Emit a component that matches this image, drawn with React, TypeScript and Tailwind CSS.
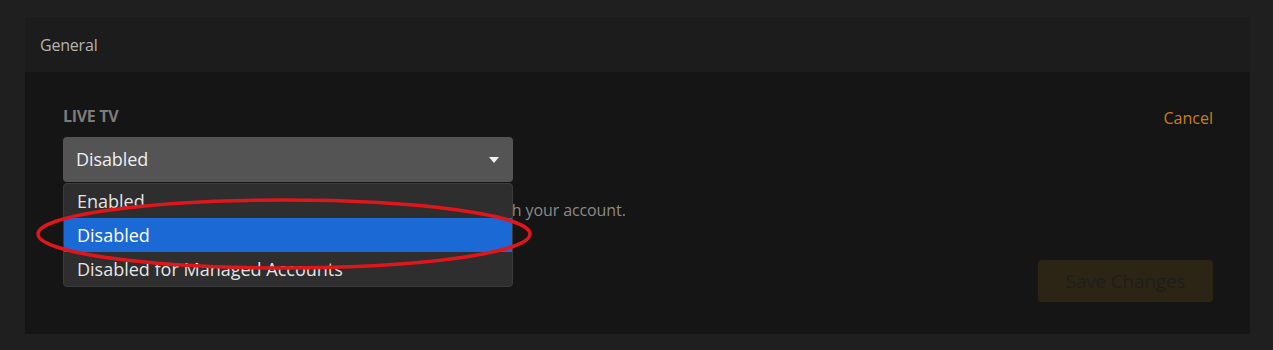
import React from "react";

const options = ["Enabled", "Disabled", "Disabled for Managed Accounts"];

export default function App() {
  const [value] = React.useState("Disabled");

  return (
    <div
      className="w-full h-[350px] bg-[#1f1f1f] pt-[17px] pl-[25px] pr-[23px]"
      style={{ fontFamily: '"Open Sans", "Noto Sans", sans-serif' }}
    >
      <div className="relative">
        {/* Header */}
        <div className="h-[55px] bg-[#1c1c1c] flex items-center px-[15px]">
          <span className="text-[16px] text-[#b3b3b3] tracking-[-0.2px]">General</span>
        </div>
        {/* Body */}
        <div className="h-[262px] bg-[#151515] pl-[38px] pr-[37px] pt-[34px] flex justify-between">
          <div className="w-[450px]">
            <div className="text-[16px] font-bold text-[#7b7b7b] uppercase tracking-[-0.3px] leading-[20px]">Live TV</div>
            <div className="relative mt-[11px]">
              <div className="h-[45px] rounded bg-[#545454] flex items-center justify-between pl-[13px] pr-[14px]">
                <span className="text-[18px] text-[#eeeeee] tracking-[-0.1px]">{value}</span>
                <svg width="10" height="6" viewBox="0 0 10 6">
                  <path d="M0 0 H10 L5 6 Z" fill="#f2f2f2" />
                </svg>
              </div>
              <p className="mt-[17px] text-[16px] text-[#8a8a8a] whitespace-nowrap tracking-[-0.1px] leading-[22px]">
                Choose whether Live TV is available to other users shared with your account.
              </p>
              {/* Open menu */}
              <div className="absolute left-0 top-[46px] w-[450px] rounded bg-[#2e2e2e] border border-[#3b3b3b] overflow-hidden">
                {options.map((opt) => (
                  <div
                    key={opt}
                    className={`h-[34px] flex items-center px-[13px] text-[18px] ${
                      opt === value ? "bg-[#1b69d4] text-white" : "text-[#e4e4e4]"
                    }`}
                  >
                    {opt}
                  </div>
                ))}
              </div>
            </div>
          </div>
          <div className="flex flex-col items-end">
            <button className="text-[16px] text-[#c97d1b] mt-[1px] leading-[22px]">Cancel</button>
            <button
              disabled
              className="mt-[131px] w-[175px] h-[42px] rounded bg-[#2c2516] text-[19px] text-[#1f1d1a] tracking-[-0.2px]"
            >
              Save Changes
            </button>
          </div>
        </div>
        {/* Annotation */}
        <svg className="absolute left-0 top-0 pointer-events-none" width="1225" height="317">
          <ellipse cx="259" cy="217" rx="246" ry="34" fill="none" stroke="#e0161b" strokeWidth="3.5" />
        </svg>
      </div>
    </div>
  );
}
